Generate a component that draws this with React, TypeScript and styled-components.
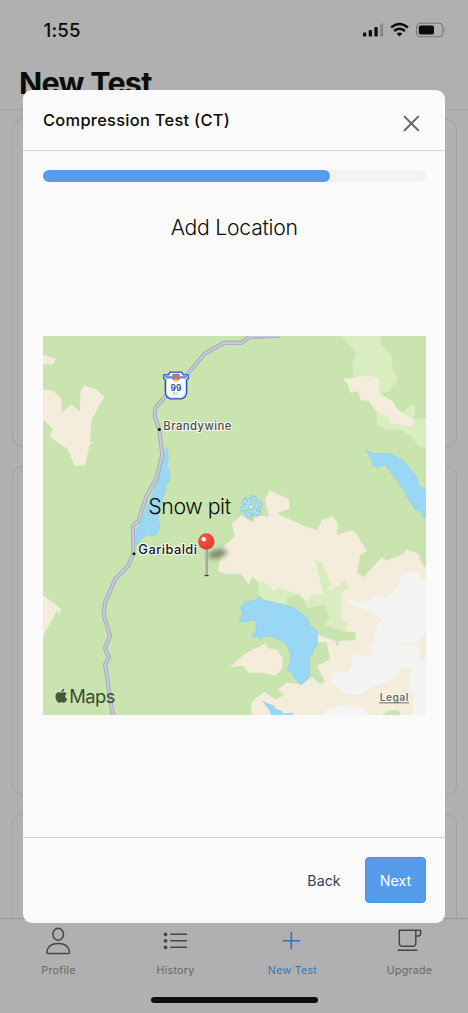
import React from "react";
import styled, { createGlobalStyle } from "styled-components";
import { FaApple } from "react-icons/fa";

const Global = createGlobalStyle`
  * { box-sizing: border-box; }
  body { margin: 0; background: #b1b1b1; font-family: Inter, "Liberation Sans", sans-serif; }
`;

const Screen = styled.div`
  position: relative;
  display: flex;
  flex-direction: column;
  width: 468px;
  height: 1013px;
  overflow: hidden;
  background: #b0b0b0;
  color: #0c0c0c;
`;

const StatusBar = styled.div`
  display: flex;
  justify-content: space-between;
  align-items: center;
  height: 60px;
  padding: 0 22px 0 43.5px;
`;

const Clock = styled.span`
  font-size: 18.6px;
  font-weight: 540;
  line-height: 24px;
  letter-spacing: 0.2px;
`;

const PageHeader = styled.header`
  height: 50px;
  padding: 4px 19px 0;
  border-bottom: 1px solid #a2a2a2;
`;

const PageTitle = styled.h1`
  margin: 0;
  font-size: 30.5px;
  line-height: 38px;
  font-weight: 650;
  letter-spacing: -0.75px;
  white-space: nowrap;
`;

const CardList = styled.main`
  flex: 1;
  min-height: 0;
  overflow: hidden;
  display: flex;
  flex-direction: column;
  gap: 19.4px;
  padding: 8.6px 11.5px 0 12px;
`;

const Card = styled.div`
  flex: 0 0 328.3px;
  border: 1px solid #a1a1a1;
  border-radius: 10px;
`;

const TabBar = styled.nav`
  display: flex;
  height: 95px;
  border-top: 1px solid #979797;
`;

const Tab = styled.div<{ $active?: boolean }>`
  flex: 1;
  display: flex;
  flex-direction: column;
  align-items: center;
  gap: 7.5px;
  padding-top: 7px;
  color: ${(p) => (p.$active ? "#346fb2" : "#464646")};
`;

const TabLabel = styled.span<{ $active?: boolean }>`
  font-size: 10.6px;
  line-height: 14px;
  letter-spacing: 0.3px;
  color: ${(p) => (p.$active ? "#3a74b6" : "#666")};
`;

const HomeIndicator = styled.div`
  position: absolute;
  left: 151px;
  bottom: 10px;
  width: 167px;
  height: 6px;
  border-radius: 3px;
  background: #101010;
`;

const Modal = styled.section`
  position: absolute;
  left: 23px;
  top: 90px;
  width: 422px;
  height: 833px;
  display: flex;
  flex-direction: column;
  border-radius: 9px;
  background: #fafafa;
  overflow: hidden;
`;

const ModalHeader = styled.div`
  display: flex;
  justify-content: space-between;
  height: 61px;
  padding: 20px 25.3px 0 20px;
  border-bottom: 1.5px solid #d8d8d8;
`;

const ModalTitle = styled.h2`
  margin: 0;
  font-size: 16.4px;
  line-height: 20px;
  font-weight: 550;
  letter-spacing: 0.3px;
`;

const CloseIcon = styled.svg`
  margin-top: 5px;
`;

const ModalBody = styled.div`
  flex: 1;
  display: flex;
  flex-direction: column;
  padding: 19px 19.5px 0 20px;
`;

const Track = styled.div`
  height: 12px;
  border-radius: 6px;
  background: #f2f2f2;
`;

const Bar = styled.div`
  width: 75%;
  height: 12px;
  border-radius: 6px;
  background: #569ceb;
`;

const StepTitle = styled.h3`
  margin: 31px 0 94.3px;
  text-align: center;
  font-size: 21.2px;
  line-height: 29px;
  font-weight: 340;
  letter-spacing: -0.25px;
`;

const MapFrame = styled.div`
  width: 382.5px;
  height: 378.7px;
  background: #c9e4af;
  svg { display: block; }
`;

const ModalFooter = styled.div`
  display: flex;
  align-items: center;
  justify-content: flex-end;
  height: 86px;
  padding: 0 19px 1px 0;
  border-top: 1.5px solid #d0d0d0;
`;

const Button = styled.button<{ $primary?: boolean }>`
  width: ${(p) => (p.$primary ? "61px" : "82px")};
  height: 46.5px;
  padding: 0;
  border: 1px solid ${(p) => (p.$primary ? "#3f97f3" : "transparent")};
  border-radius: 4px;
  background: ${(p) => (p.$primary ? "#569ceb" : "transparent")};
  color: ${(p) => (p.$primary ? "#fff" : "#333f5b")};
  font-family: inherit;
  font-size: 14.2px;
  font-weight: 400;
  letter-spacing: 0.05px;
`;

const SAND = "#f4eddc";
const MEADOW = "#d9edc0";
const FOREST = "#c9e4af";
const WATER = "#9ad7f4";
const SNOW = "#f4f4f4";
const ROAD =
  "M710-3 620 0 594 18 543 18 483 52 450 93 368 177 337 213 335 238 349 280 358 353 341 424 312 475 286 552 270 567 271 650 255 688 217 726 186 797 182 836 201 897 186 934 198 962 186 983 210 1138";

function StatusIcons() {
  return (
    <svg width="84" height="18" viewBox="0 0 84 18" style={{ display: "block" }}>
      <g fill="#0c0c0c">
        <rect x="1" y="11.6" width="3.3" height="4" rx="0.8" />
        <rect x="6.7" y="9" width="3.3" height="6.6" rx="0.8" />
        <rect x="12.4" y="6" width="3.3" height="9.6" rx="0.8" />
        <rect x="18" y="2.6" width="3.3" height="13" rx="0.8" fill="#8b8b8b" />
      </g>
      <g fill="none" stroke="#0c0c0c" strokeWidth="2.4">
        <path d="M29.1 6.5q8.4-7 16.8 0" />
        <path d="M32.1 10q5.4-4.3 10.8 0" />
      </g>
      <path d="M34.6 12.6q2.9-2.2 5.8 0L37.5 15.6Z" fill="#0c0c0c" />
      <rect x="54.6" y="2.2" width="26.2" height="13.6" rx="4" fill="none" stroke="#777" strokeWidth="1.1" />
      <rect x="56.8" y="4.4" width="15.2" height="9.2" rx="1.8" fill="#0c0c0c" />
      <path d="M82.2 7.2q1.6 1.8 0 3.6Z" fill="#777" />
    </svg>
  );
}

function Snowflake() {
  return (
    <g transform="translate(625 510)" strokeLinecap="round" fill="none">
      {[15, 75, 135, 195, 255, 315].map((a) => (
        <g key={a} transform={`rotate(${a})`}>
          <path d="M0-4V-33M-8-31 0-23 8-31M-11-23 0-13 11-23" stroke="#5fafe0" strokeWidth="5" />
          <path d="M0-4V-33M-8-31 0-23 8-31M-11-23 0-13 11-23" stroke="#bfeafb" strokeWidth="3" />
        </g>
      ))}
      <circle r="7" fill="#c8effb" stroke="#62b5e6" strokeWidth="1.5" />
    </g>
  );
}

function HighwayShield() {
  return (
    <g transform="translate(-9 -20)">
      <path
        d="M390 126H425L430 134H444L445 144 440 150V184Q440 202 424 206H392Q376 202 376 184V150L371 144 372 134H386Z"
        fill="#fff"
        stroke="#2551b9"
        strokeWidth="4"
      />
      <path d="M380 140H436V182Q436 198 422 202H394Q380 198 380 182Z" fill="#fff" stroke="#8facdf" strokeWidth="1.5" />
      <path d="M374 138H398V145H378ZM442 138H418V145H438Z" fill="#6387cb" />
      <path d="M397 131H419V148Q408 158 397 148Z" fill="#8a75ae" />
      <path d="M398 135H418V142H398Z" fill="#df6e72" />
      <path d="M400 149Q408 143 416 149L412 154H404Z" fill="#f4b746" />
      <text x="408" y="181" textAnchor="middle" fontSize="25" fontWeight="700" fill="#2454a8">99</text>
      <text x="408" y="195" textAnchor="middle" fontSize="9" fill="#6e90c9">B.C.</text>
    </g>
  );
}

function TerrainMap() {
  return (
    <MapFrame>
      <svg width="382.5" height="378.7" viewBox="0 -2.5 1147.5 1136" fontFamily='Inter, "Liberation Sans", sans-serif'>
        <defs>
          <filter id="shade" x="-50%" y="-80%" width="200%" height="260%">
            <feGaussianBlur stdDeviation="8" />
          </filter>
          <radialGradient id="head" cx="0.38" cy="0.32" r="0.75">
            <stop offset="0" stopColor="#f35a4c" />
            <stop offset="0.7" stopColor="#ea4037" />
            <stop offset="1" stopColor="#d63a33" />
          </radialGradient>
        </defs>
        <g transform="translate(-9 -20)" fill={SAND}>
          <path d="M0 74 9 74 47 84 40 102 0 101Z" />
          <path d="M0 178 37 180 63 203 67 247 94 223 120 243 121 185 133 166 165 175 193 200 154 270 150 335 162 338 150 341 135 406 103 406 83 357 30 320 39 298 0 258Z" />
          <path d="M0 790 9 796 63 836 57 856 50 842 9 918 0 930Z" />
        </g>
        <g transform="translate(561 -20)">
          <path fill={MEADOW} d="M332 15 450 15 453 45 470 55 485 80 488 115 505 147 475 185 450 190 372 145 367 95 380 72 360 45Z" />
          <path fill={MEADOW} d="M440 248 520 245 543 222 555 228 553 268 590 263 590 353 568 350 545 320 510 297 475 301 440 283Z" />
          <path fill={SAND} d="M340 147 417 135 447 145 450 190 487 212 500 235 556 273 545 290 477 278 482 263 443 248 415 212 393 210 383 183 360 188 353 160Z" />
          <path fill={WATER} stroke="#8bcfef" strokeWidth="2" d="M405 358 430 370 480 371 518 390 545 422 564 443 564 465 590 480 590 565 577 558 575 545 555 537 540 515 515 470 485 430 465 403 445 411 430 408 422 380Z" />
        </g>
        <g transform="translate(561 550)">
          <path fill={SAND} d="M118-90 176-63 180-36 140-20 185 0 215 15 262 30 275 0 307-12 323 8 321 44 367 30 385 45 394 68 411 92 390 105 382 157 401 171 455 111 470 122 523 100 527 87 566 101 571 122 590 147V590H0V165L-10 162-37 152-20 80 15 48 5 10 35-15 68 8 78-15 118-10 105-62Z" />
          <path fill={FOREST} d="M-60 165-10 162 32 160 56 193 67 170 88 187 88 225 165 255 172 230 208 222 228 245 228 265 285 252 300 290 286 315 345 333 378 337 375 360 330 362 322 376 316 372 322 365 262 342 262 366 290 366 300 417 261 437 284 484 272 492 245 470 215 493 172 487 142 509 164 523 137 539 102 514 66 545 62 570 70 590-60 590Z" />
          <path fill={SAND} d="M-2 442 45 400 108 369 115 385 140 387 158 415 157 445 137 466 95 458 55 458 40 436Z" />
          <path fill={MEADOW} d="M88 190 98 182 130 212 148 203 208 223 172 230 165 255 88 232Z" />
          <path fill={MEADOW} d="M226 245 245 225 280 221 254 118 276 126 304 194 290 213 330 195 347 177 356 205 335 218 335 300 356 308 345 335 286 315 300 290 285 252 228 265Z" />
          <path fill={SNOW} d="M350 236 395 250 455 220 470 235 505 195 518 160 565 155 571 180 590 185V328L557 372 535 367 490 378 545 375 570 385 568 420 590 430V583H545L552 530 537 500 543 447 515 438 490 478 440 495 385 523 345 520 302 487 315 450 350 460 365 435 370 400 412 412 433 392 412 382 434 370 437 320 453 300 462 335 457 295 410 270 370 255Z" />
          <path fill={SNOW} d="M275 590 290 568 350 552 410 568 410 590Z" />
          <path fill={FOREST} d="M447 590 475 572 505 570 515 590Z" />
          <path fill={WATER} stroke="#8bcfef" strokeWidth="2" d="M30 265 45 245 80 240 86 227 100 240 165 255 190 262 215 280 235 300 240 318 262 332 262 375 248 392 248 405 238 412 240 470 213 494 195 475 190 460 172 452 182 420 182 400 168 370 125 348 100 350 92 360 85 350 65 350 78 330 78 300 28 306 38 275Z" />
          <path fill={WATER} d="M95 540 115 550 133 557 137 566 155 572 160 580 187 578 192 590 125 590 118 570Z" />
        </g>
        <path fill={WATER} stroke="#8bcfef" strokeWidth="2" d="M369 332 375 336 374 355 377 365 371 385 381 411 379 435 369 442 366 465 357 490 347 520 344 548 352 568 341 591 331 597 310 592 279 626 279 580 300 540 320 490 350 420 360 350Z" />
        <path d={ROAD} fill="none" stroke="#a0a5ba" strokeWidth="12" strokeLinejoin="round" />
        <path d={ROAD} fill="none" stroke="#c7cad8" strokeWidth="7" strokeLinejoin="round" />
        <HighwayShield />
        <g stroke="#fff" fill="#111" strokeWidth="3" paintOrder="stroke">
          <circle cx="349" cy="278" r="5" />
          <circle cx="273" cy="651" r="5" />
        </g>
        <g stroke="#f8faf4" strokeWidth="6" strokeLinejoin="round" paintOrder="stroke">
          <text x="361" y="278" fontSize="34" fontWeight="500" fill="#4a4a4a" textLength="204">Brandywine</text>
          <text x="286" y="650" fontSize="38.5" fontWeight="500" fill="#151515" textLength="176">Garibaldi</text>
          <text x="1010" y="1093" fontSize="31" fontWeight="600" fill="#6d6d65" textLength="86">Legal</text>
        </g>
        <path d="M1008 1098H1098" stroke="#6d6d65" strokeWidth="3" />
        <ellipse cx="524" cy="651" rx="30" ry="13" transform="rotate(-14 524 651)" fill="#46513c" opacity="0.6" filter="url(#shade)" />
        <path d="M491 635V714" stroke="#929292" strokeWidth="6" />
        <path d="M490 635V714" stroke="#c1c1c1" strokeWidth="2" />
        <path d="M485 716H497" stroke="#454545" strokeWidth="4" />
        <circle cx="490" cy="614" r="24.5" fill="url(#head)" />
        <circle cx="482" cy="607" r="6.5" fill="#fff" />
        <text x="316" y="531" fontSize="64" fontWeight="340" fill="#0b0b0b" textLength="248">Snow pit</text>
        <Snowflake />
        <FaApple x="31" y="1053" size={48} color="#48573e" />
        <text x="79" y="1099" fontSize="55" fontWeight="400" fill="#3e4b36" textLength="138">Maps</text>
      </svg>
    </MapFrame>
  );
}

function TabIcon({ children }: { children: React.ReactNode }) {
  return (
    <svg width="30" height="30" viewBox="0.6 0 30 30" fill="none" stroke="currentColor" strokeWidth="1.45" strokeLinejoin="round">
      {children}
    </svg>
  );
}

export default function App() {
  return (
    <>
      <Global />
      <Screen>
        <StatusBar>
          <Clock>1:55</Clock>
          <StatusIcons />
        </StatusBar>
        <PageHeader>
          <PageTitle>New Test</PageTitle>
        </PageHeader>
        <CardList>
          <Card />
          <Card />
          <Card />
        </CardList>
        <TabBar>
          <Tab>
            <TabIcon>
              <ellipse cx="14.8" cy="8.2" rx="5.3" ry="6" />
              <path d="M4.6 27.5H25Q26.3 27.5 26.2 26.1C25.4 20.2 20.8 17.4 14.8 17.4S4.2 20.2 3.4 26.1Q3.3 27.5 4.6 27.5Z" />
            </TabIcon>
            <TabLabel>Profile</TabLabel>
          </Tab>
          <Tab>
            <TabIcon>
              <path d="M9.8 8.3H26.7M9.8 14.8H26.7M9.8 21.3H26.7" />
              <g fill="currentColor" stroke="none">
                <circle cx="5.1" cy="8.3" r="1.9" />
                <circle cx="5.1" cy="14.8" r="1.9" />
                <circle cx="5.1" cy="21.3" r="1.9" />
              </g>
            </TabIcon>
            <TabLabel>History</TabLabel>
          </Tab>
          <Tab $active>
            <TabIcon>
              <path d="M5.4 14.8H22.4M13.9 6.3V23.3" strokeWidth="1.6" />
            </TabIcon>
            <TabLabel $active>New Test</TabLabel>
          </Tab>
          <Tab>
            <TabIcon>
              <path d="M4.9 4.2H21.4V17.2Q21.4 20.3 18.1 20.3H8.2Q4.9 20.3 4.9 17.2ZM21.4 4.2H26.2V7.4Q26.2 9.9 23.8 9.9H21.4M3.4 24.2H23.1" />
            </TabIcon>
            <TabLabel>Upgrade</TabLabel>
          </Tab>
        </TabBar>
        <HomeIndicator />
        <Modal>
          <ModalHeader>
            <ModalTitle>Compression Test (CT)</ModalTitle>
            <CloseIcon width="17" height="17" viewBox="0 0 17 17" fill="none" stroke="#686868" strokeWidth="2" strokeLinecap="round">
              <path d="M1.6 1.6 15.2 15.2M15.2 1.6 1.6 15.2" />
            </CloseIcon>
          </ModalHeader>
          <ModalBody>
            <Track>
              <Bar />
            </Track>
            <StepTitle>Add Location</StepTitle>
            <TerrainMap />
          </ModalBody>
          <ModalFooter>
            <Button>Back</Button>
            <Button $primary>Next</Button>
          </ModalFooter>
        </Modal>
      </Screen>
    </>
  );
}
